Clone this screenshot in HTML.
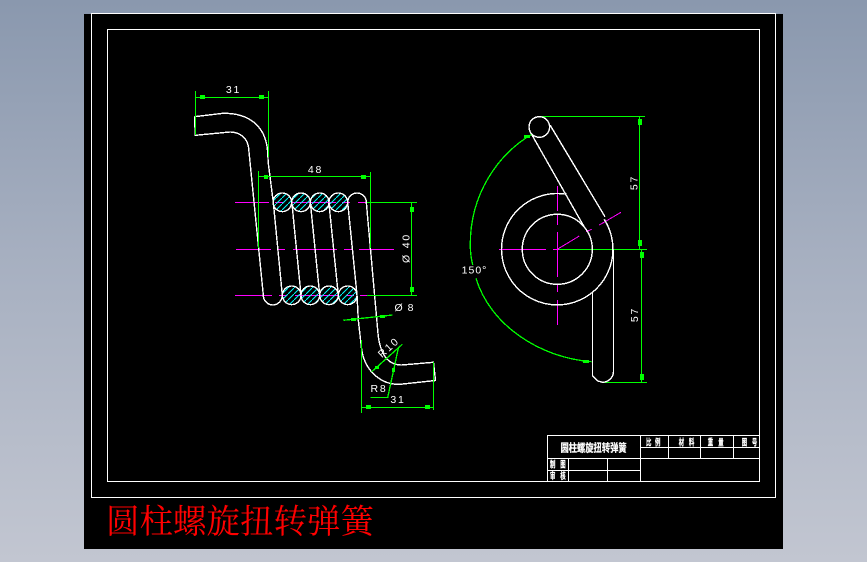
<!DOCTYPE html>
<html lang="zh">
<head>
<meta charset="utf-8">
<title>圆柱螺旋扭转弹簧</title>
<style>
html,body{margin:0;padding:0;width:867px;height:562px;overflow:hidden;background:linear-gradient(180deg,#8a98ae 0%,#a6afc0 45%,#c2c6d1 100%)}
svg{position:absolute;left:0;top:0;display:block}
text{font-family:"Liberation Sans","Noto Sans CJK SC",sans-serif}
</style>
</head>
<body>
<svg width="867" height="562" viewBox="0 0 867 562" xmlns="http://www.w3.org/2000/svg">
<defs>
<pattern id="h" patternUnits="userSpaceOnUse" width="6" height="6">
<path d="M0 6L6 0" stroke="#00ffff" stroke-width="1"/>
</pattern>
</defs>
<rect x="84" y="14" width="699" height="535" fill="#000"/>
<g fill="none" stroke="#fff" stroke-width="1" shape-rendering="crispEdges">
<rect x="91.5" y="13.5" width="684" height="484"/>
<rect x="107.5" y="29.5" width="652" height="452"/>
<!-- title block -->
<path d="M547.5 481V435.5H759M547.5 458.5H759M640.5 447.5H759M547.5 470.5H640.5M568.5 458V481M607.5 458V481M640.5 435V481M668.5 435V458M700.5 435V458M733.5 435V458"/>
</g>
<!-- magenta centre lines -->
<g stroke="#ff00ff" stroke-width="1" fill="none" shape-rendering="crispEdges">
<path d="M235 202.5H269M275 202.5H283M292 202.5H336M342 202.5H350M358 202.5H367"/>
<path d="M236 249.5H271M277 249.5H285M293 249.5H337M344 249.5H352M359 249.5H394"/>
<path d="M235 295.5H272M279 295.5H287M295 295.5H339M346 295.5H354M360 295.5H367"/>
<path d="M499 249.5H546M553 249.5H559"/>
<path d="M557.5 186V211M557.5 215V225M557.5 232V249M557.5 249V277M557.5 285V292M557.5 300V325"/>
<path d="M557.3 249.3L579.3 236M586 231.7L591.7 229.3M599.3 225L621 212.3"/>
</g>
<!-- left view spring -->
<g fill="none" stroke="#fff" stroke-width="1.4" shape-rendering="crispEdges">
<g fill="url(#h)">
<circle cx="282.3" cy="202.3" r="9.3"/>
<circle cx="301" cy="202.3" r="9.3"/>
<circle cx="319.7" cy="202.3" r="9.3"/>
<circle cx="338.3" cy="202.3" r="9.3"/>
<circle cx="291.7" cy="295.3" r="9.3"/>
<circle cx="310.3" cy="295.3" r="9.3"/>
<circle cx="329" cy="295.3" r="9.3"/>
<circle cx="347.7" cy="295.3" r="9.3"/>
</g>
<path d="M347.7 202.3A9.3 9.3 0 0 1 366.3 202.3"/>
<path d="M263.3 295A9.5 10 0 0 0 282.3 295"/>
<!-- top hook -->
<path d="M194.5 116.7L223 113.3C248 113 265 125 267.5 150L268.3 163.3L273.3 202.3L282.3 295"/>
<path d="M194.5 116.7L195.3 135.3L230 132C240 132 247 138 248.5 147L263.3 295"/>
<!-- strands -->
<path d="M292 204L301 295M310.5 204L319.7 295M329 204L338.3 295M347.7 202.3L357 295L358.3 320L361.7 350C365 370 380 385 400 384.3L435.5 380.5L433.5 362.3L401.7 365C388 365 381 355 378.3 336.7L366.3 202.3"/>
</g>
<!-- green dims left -->
<g fill="none" stroke="#00ff00" stroke-width="1.3" shape-rendering="crispEdges">
<path d="M195.5 91V135M268.5 91V157M196 97.5H268"/>
<path d="M258.5 171V248M370.5 172V248M259 176.5H370"/>
<path d="M367 202.5H417M367 295.5H417M411.5 202V296"/>
<path d="M343.3 320.3L392.7 315"/>
<path d="M371.7 371.7L402.3 344.3M370.7 397.5H387.7L398.3 348.3"/>
<path d="M361.5 340V413M433.5 362V410M362 407.5H433"/>
<!-- right view -->
<path d="M541 116.5H645M639.5 116V249M559 249.5H647M641.5 250V382M603 382.5H647"/>
<path d="M531.7 134.3C497 155 470 195 470.3 245C470.3 252 471 258 472.7 265M476 278.3C490 325 540 358 591.7 361.7"/>
</g>
<g fill="#00ff00" shape-rendering="crispEdges">
<rect x="200" y="95" width="5" height="4"/><rect x="259" y="95" width="5" height="4"/>
<rect x="264" y="175" width="4" height="4"/><rect x="361" y="175" width="5" height="4"/>
<rect x="410" y="207" width="4" height="5"/><rect x="410" y="287" width="4" height="5"/>
<rect x="351" y="318" width="5" height="3"/><rect x="380" y="315" width="5" height="3"/>
<rect x="366" y="405" width="5" height="4"/><rect x="425" y="405" width="5" height="4"/>
<rect x="375" y="366" width="4" height="3"/><rect x="392" y="368" width="3" height="4"/>
<rect x="638" y="119" width="4" height="6"/><rect x="638" y="240" width="4" height="6"/>
<rect x="640" y="252" width="4" height="6"/><rect x="640" y="374" width="4" height="6"/>
<rect x="524" y="135" width="6" height="3"/><rect x="583" y="360" width="6" height="3"/>
</g>
<!-- right view white -->
<g fill="none" stroke="#fff" stroke-width="1.4" shape-rendering="crispEdges">
<circle cx="539.3" cy="127" r="10.3"/>
<circle cx="557.3" cy="249.3" r="35"/>
<path d="M566.7 194.3A55.7 55.7 0 1 0 604.3 219.4"/>
<path d="M532 135L585 228.3M550 125L605 216.7"/>
<path d="M592.5 291.7V376L598 381L602.7 382.3C608 382 613.3 378 613.5 371.7V249.3"/>
</g>
<!-- dimension text -->
<g fill="#fff" font-size="10.5" letter-spacing="1.8" text-anchor="middle">
<text x="233.5" y="93">31</text>
<text x="315.5" y="173">48</text>
<text x="404.5" y="311" letter-spacing="1">Ø 8</text>
<text x="379" y="392">R8</text>
<text x="398" y="403">31</text>
<text x="474.5" y="273.5" letter-spacing="1">150°</text>
<text transform="translate(409.5 248) rotate(-90)">Ø 40</text>
<text transform="translate(637.5 182.5) rotate(-90)">57</text>
<text transform="translate(638 314.5) rotate(-90)">57</text>
<text transform="translate(391 350) rotate(-42)">R10</text>
</g>
<!-- title block text -->
<g fill="#fff" stroke="#fff" stroke-width=".25" font-weight="700" font-family="'Liberation Sans','Noto Sans CJK SC',sans-serif">
<text transform="translate(560.5 451.5) scale(.78 1)" font-size="10.6">圆柱螺旋扭转弹簧</text>
<g font-size="9">
<text transform="translate(646 445.5) scale(.6 1)" x="0 15">比例</text>
<text transform="translate(678.7 445.5) scale(.6 1)" x="0 17">材料</text>
<text transform="translate(707.7 445.5) scale(.6 1)" x="0 17.5">重量</text>
<text transform="translate(741.7 445.5) scale(.6 1)" x="0 17">图号</text>
<text transform="translate(550 467.5) scale(.6 1)" x="0 17">制图</text>
<text transform="translate(550 479) scale(.6 1)" x="0 17">审核</text>
</g>
</g>
<!-- red title -->
<text x="106" y="533" font-size="33.5" fill="#ff0000" style="font-family:'Liberation Serif','Noto Serif CJK SC',serif">圆柱螺旋扭转弹簧</text>
</svg>
</body>
</html>
